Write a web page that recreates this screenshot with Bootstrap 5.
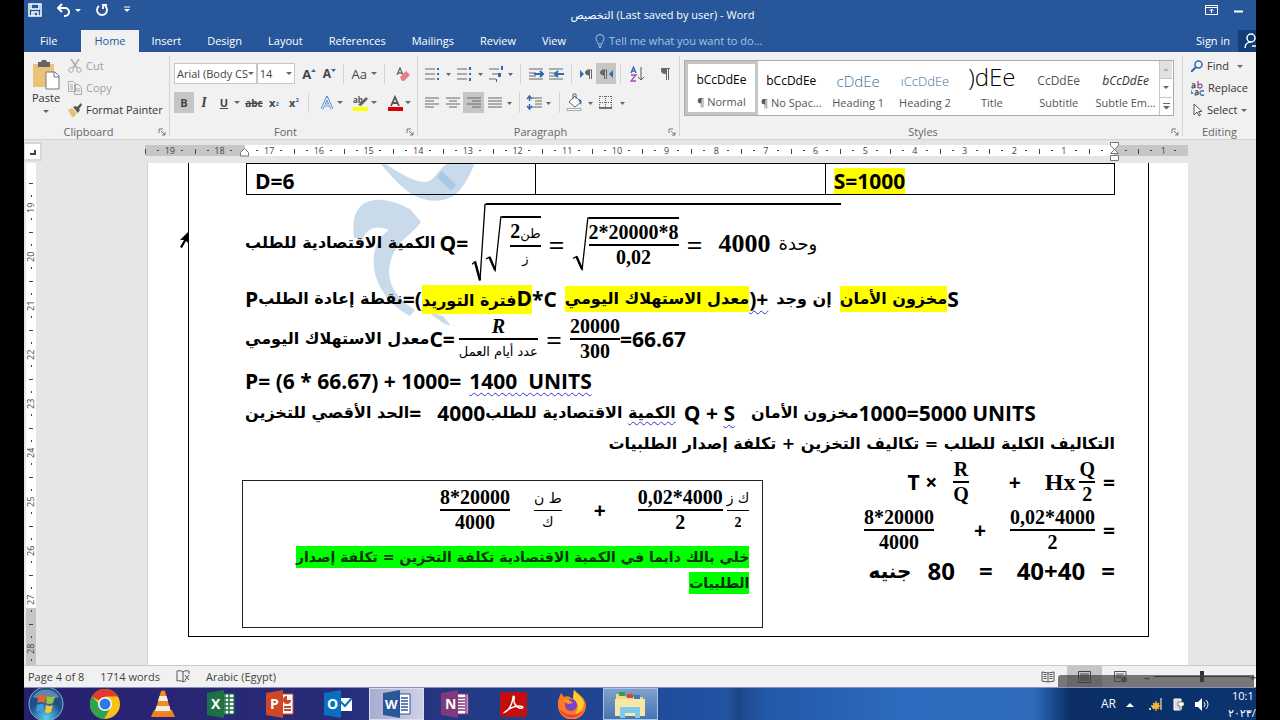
<!DOCTYPE html>
<html lang="en">
<head>
<meta charset="utf-8">
<meta name="viewport" content="width=device-width, initial-scale=1">
<title>التخصيص (Last saved by user) - Word</title>
<link rel="stylesheet" href="https://cdn.jsdelivr.net/npm/bootstrap@5.3.0/dist/css/bootstrap.min.css">
<style>
:root{--word:#27579a}
body{background:#000;font-family:"Open Sans","DejaVu Sans",sans-serif;font-size:11px;line-height:16px;color:#444}
button,input{font:inherit;color:inherit}
button{background:none;border:0;padding:0}
svg{display:block;flex:none}
.word-app{height:100vh;margin:0 24px;background:#e6e6e6;overflow:hidden}
/* title bar and tabs */
.title-bar{height:30px;background:var(--word);color:#fff;padding:0 9px 0 4px}
.title-bar .side{flex:1 1 0;height:20px}
.quick{gap:14px}
.doc-title{padding:7px 0 0 50px}
.tab-bar{height:22px;background:var(--word);color:#fff}
.tab-bar a{color:#fff;text-decoration:none;height:22px;line-height:22px;padding:0 13px}
.tab-bar a.active{background:#f1f1f1;color:#27579a}
.share{width:18px;height:22px;background:#123f78;overflow:hidden}
/* ribbon */
.ribbon{height:88px;background:#f1f1f1;border-bottom:1px solid #d2d2d2}
.grp{border-right:1px solid #d4d4d4;margin:4px 0 3px;position:relative}
.grp-name{position:absolute;left:0;right:16px;bottom:-4px;text-align:center;color:#666}
.edit-grp .grp-name{right:0}
.launch{position:absolute;right:3px;bottom:0}
.dim{color:#a0a0a0}
.stack{gap:6px;padding-top:2px}
.tools{height:21px;margin-top:8px}
.tools:first-child{margin-top:7px}
.caret{width:0;height:0;border:3px solid transparent;border-top-color:#666;border-bottom:0;flex:none}
.on{background:#c5c5c5}
.vr-line{width:1px;height:20px;background:#d4d4d4}
.tool{height:21px;min-width:20px;display:inline-flex;align-items:center;justify-content:center;font-weight:700}
.combo{height:21px;border:1px solid #c6c6c6;background:#fff;padding:0 2px}
.combo input{border:0;padding:0;outline:0;background:none;min-width:0}
.gallery{background:#fff;border:1px solid #ababab;height:56px}
.sty{flex:1 1 0;height:54px;text-align:center;color:#555;overflow:hidden;white-space:nowrap}
.sty b{display:block;height:30px;line-height:38px;font-weight:400;font-size:12px;color:#000}
.sty span{display:block;line-height:22px}
.sty.cur{border:3px solid #c5c5c5}
.sty.cur b{height:27px;line-height:32px}
.gal-nav{width:14px}
.gal-nav button{flex:1 1 0;width:13px;border-left:1px solid #c6c6c6;border-bottom:1px solid #c6c6c6;display:flex;align-items:center;justify-content:center}
/* rulers */
.ruler-row{height:23px}
.ruler{height:11px;margin:5px 68px 0 121px;background:linear-gradient(90deg,#c6c6c6 100px,#fff 100px,#fff calc(100% - 74px),#c6c6c6 calc(100% - 74px));color:#444}
.ruler span{flex:1 1 0;text-align:center;background:linear-gradient(#444,#444) 0 4px/1px 5px no-repeat,linear-gradient(#444,#444) 25% 5px/2px 1px no-repeat,linear-gradient(#444,#444) 75% 5px/2px 1px no-repeat;min-width:0}
.ruler,.v-ruler{font:9px/11px "Open Sans",sans-serif}
.v-ruler{width:10px;margin-left:2px;padding-top:20px;background:linear-gradient(#fff 445px,#c6c6c6 445px);color:#444}
.v-ruler span{flex:0 0 49px;width:10px;display:flex;align-items:center;justify-content:center;writing-mode:vertical-rl;transform:rotate(180deg);line-height:10px;background:linear-gradient(#444,#444) 3px 100%/4px 1px no-repeat,linear-gradient(#444,#444) 4px 25%/1px 2px no-repeat,linear-gradient(#444,#444) 4px 75%/1px 2px no-repeat}
.tab-sel{width:15px;height:15px;margin:4px 0 0 1px;background:#fff;outline:2px solid #d8d8d8}
/* page */
.sheet{margin:0 68px 0 111px;padding:1px 0 0;background:#fff;border-left:1px solid #d0d0d0;overflow:hidden}
.framed{margin:-1px 39px 28px 40px;border:1px solid #000;border-top:0;padding:0 33px 0 57px;color:#000;position:relative;font:700 21px/30px "Open Sans","DejaVu Sans",sans-serif}
.framed>*{position:relative}
.framed>.mark-svg{position:absolute;left:150px;top:0}
.vals{width:100%;border-collapse:collapse;table-layout:fixed}
.vals td{border:1px solid #000;height:31px;padding:3px 8px 0;line-height:26px}
.hl{background:#ff0;display:inline-block}
.eq{white-space:nowrap;display:flex;align-items:center;margin-left:-1px;height:30px}
.eq.h26{height:26px;line-height:26px}
.eq.h28{height:28px}
.eq.h34{height:34px}
.eq.h54{height:54px}
.eq.h91{height:91px}
.ar{font-family:"DejaVu Sans",sans-serif;font-size:16px}
.thin{font-weight:400}
.equals{font-size:28px;font-weight:400;line-height:20px}
.frac{display:inline-flex;flex-direction:column;align-items:center;font:700 20px/23px "Liberation Serif","DejaVu Sans",serif}
.frac>:first-child{border-bottom:2px solid #000;align-self:stretch;text-align:center}
.frac .ar{font-size:13px;font-weight:400}
.frac.tiny,.frac.tiny .ar{font-size:14px}
.frac.tiny>:first-child{border-bottom-width:1px}
.root{display:flex;align-items:stretch}
.root>div{border-top:2px solid #000;display:flex;align-items:center}
.serif{font-family:"Liberation Serif",serif;font-size:24px}
.root .serif{font-size:26px}
.root>div>.ar{font-size:18px}
.wavy{text-decoration:underline wavy #3a3ac0 1px;text-underline-offset:3px}
.note{border:1px solid #222;height:148px;flex:0 0 60%;margin:22px 0 0 -4px;padding:5px 13px}
.note p{font:700 14px/26px "DejaVu Sans",sans-serif;margin:10px 0 0}
.green{background:#0f0;padding:3px 0;color:#063006}
.total{font-size:24px;line-height:34px}
.total .ar{font-size:20px}
/* bottom bars */
.status{height:22px;background:#f1f1f1;border-top:1px solid #c8c8c8;position:relative}
.view-on{width:35px;height:21px}
.shade{position:absolute;right:2px;width:196px;top:9px;height:12px;background:rgba(60,60,60,.68);border-radius:3px 3px 0 0}
.zoom{appearance:none;width:96px;height:14px;background:linear-gradient(#333,#333) center/100% 1px no-repeat}
.zoom::-webkit-slider-thumb{appearance:none;width:4px;height:11px;background:#333}
.taskbar{height:33px;border-top:1px solid #8395b8;background:linear-gradient(90deg,#28206e,#272b78 23%,#213f8a 42%,#2050a0 55%,#2354a2 57%,#1d4689 58%,#2258a8 60%,#2d6cc0 72%,#2e6bbb 82%,#0a2d64 85%,#0b3470)}
.task{width:55px;height:32px;display:flex;align-items:center;justify-content:center;flex:none}
.task.start{width:44px}
.pinned{flex:0 1 581px;margin-left:9px}
.task.open{background:linear-gradient(90deg,#a8adcf,#cdd1e4);border:1px solid #dde}
.task.half{background:linear-gradient(#7fa0cb,#4775b3);border:1px solid #a9c4e4}
.tray{color:#fff;gap:10px}
.clock{width:28px;line-height:17px;white-space:nowrap}
</style>
<script src="https://cdn.jsdelivr.net/npm/bootstrap@5.3.0/dist/js/bootstrap.bundle.min.js"></script>
</head>
<body>
<svg width="0" height="0" class="position-absolute">
 <defs>
  <symbol id="launch" viewBox="0 0 8 8"><path d="M1 5V1h4M3 3l4 4M7 4v3H4" fill="none" stroke="#777"/></symbol>
  <symbol id="rad" viewBox="0 0 14 60" preserveAspectRatio="none"><path d="M0 46l3-2 5 14L13 1h1" fill="none" stroke="#000" stroke-width="1.3" vector-effect="non-scaling-stroke"/><path d="M3 44l5 14" fill="none" stroke="#000" stroke-width="2.400" vector-effect="non-scaling-stroke"/></symbol>
 </defs>
</svg>
<div class="word-app d-flex flex-column">
 <header class="title-bar d-flex flex-shrink-0">
  <div class="side quick d-flex align-items-center">
   <button aria-label="Save"><svg width="14" height="14" viewBox="0 0 14 14"><path d="M1 1h12v12H1zM3 1v5h8V1M4 13V9h6v4M6 10v3" fill="none" stroke="#fff" stroke-width="1.5"/></svg></button>
   <button aria-label="Undo" class="d-flex align-items-center gap-1"><svg width="15" height="14" viewBox="0 0 15 14"><path d="M2 5h7a4 4 0 0 1 0 8H8M6 1L2 5l4 4" fill="none" stroke="#fff" stroke-width="2"/></svg><i class="caret" style="border-top-color:#fff"></i></button>
   <button aria-label="Redo"><svg width="14" height="14" viewBox="0 0 14 14"><path d="M4 3a5 5 0 1 0 6 0M8 6V2h4" fill="none" stroke="#fff" stroke-width="1.8"/></svg></button>
   <button aria-label="Customize"><svg width="8" height="8"><path d="M1 1h6" stroke="#fff"/><path d="M1 3h6L4 6z" fill="#fff"/></svg></button>
  </div>
  <div class="doc-title"><span class="ar" style="font-size:11px">التخصيص</span> (Last saved by user) - Word</div>
  <div class="side d-flex align-items-center justify-content-end gap-3">
   <button aria-label="Ribbon display options"><svg width="13" height="10" viewBox="0 0 13 10"><path d="M.5.5h12v9H.5zM.5 2.5h12M6.500 8V4M4.500 6l2-2 2 2" fill="none" stroke="#fff"/></svg></button>
   <button aria-label="Minimize" class="me-1"><svg width="9" height="6"><path d="M0 4.500h9" stroke="#fff" stroke-width="2"/></svg></button>
  </div>
 </header>
 <nav class="tab-bar d-flex flex-shrink-0">
  <a href="#" class="px-3">File</a><a href="#" class="active ms-2">Home</a><a href="#">Insert</a><a href="#">Design</a><a href="#">Layout</a><a href="#">References</a><a href="#">Mailings</a><a href="#">Review</a><a href="#">View</a>
  <button class="d-flex align-items-center gap-1 ms-3" style="color:#a9c1e4"><svg width="10" height="14" viewBox="0 0 10 14"><path d="M3 10C3 8 1 7 1 4.500a4 4 0 0 1 8 0C9 7 7 8 7 10zM3 12h4M4 13.500h2" fill="none" stroke="#a9c1e4"/></svg>Tell me what you want to do...</button>
  <a href="#" class="ms-auto px-2">Sign in</a>
  <button class="share" aria-label="Share"><svg width="18" height="18" viewBox="0 0 18 18"><circle cx="13" cy="6" r="4" fill="none" stroke="#fff" stroke-width="1.500"/><path d="M7 16c0-4 3-6 6-6M14 14h5" fill="none" stroke="#fff" stroke-width="1.500"/></svg></button>
 </nav>
 <section class="ribbon d-flex flex-shrink-0">
  <div class="grp" style="width:146px">
   <div class="d-flex">
    <button class="text-center ps-2 pt-1 align-self-start" style="color:#333"><svg class="mx-auto" width="28" height="30" viewBox="0 0 28 30"><path d="M1 4h21v23H1z" fill="#eac378"/><path d="M6 2h3l1-2h4l1 2h3v5H6z" fill="#666"/><path d="M14 12h9l4 4v13H14z" fill="#fff" stroke="#777"/><path d="M22 12v5h5" fill="none" stroke="#777"/></svg>Paste<i class="caret d-block mx-auto mt-1"></i></button>
    <div class="stack d-flex flex-column ps-2">
     <button class="dim d-flex gap-1 align-items-center"><svg width="14" height="14" viewBox="0 0 14 14"><path d="M3 0l6 9M11 0L5 9" stroke="#aaa" stroke-width="1.500"/><circle cx="3" cy="11" r="2.300" fill="none" stroke="#aaa"/><circle cx="11" cy="11" r="2.300" fill="none" stroke="#aaa"/></svg>Cut</button>
     <button class="dim d-flex gap-1 align-items-center"><svg width="14" height="14" viewBox="0 0 14 14"><path d="M.5.5h5l2 2v8h-7zM6.500 3.500h4l3 3v7h-7zM2 4h3M2 6h3M2 8h3M8 8h4M8 10h4" fill="none" stroke="#aaa"/></svg>Copy</button>
     <button class="d-flex gap-1 align-items-center" style="color:#333"><svg width="14" height="14" viewBox="0 0 14 14"><path d="M0 7l4-2 5 5-3 4H4z" fill="#e8bf72"/><path d="M5 4l3-1 4 4-2 3zM9 4l4-4 1 2-3 4z" fill="#555"/></svg>Format Painter</button>
    </div>
   </div>
   <div class="grp-name">Clipboard</div><svg class="launch" width="8" height="8"><use href="#launch"/></svg>
  </div>
  <div class="grp px-1" style="width:248px">
   <div class="tools d-flex align-items-center">
    <label class="combo d-flex align-items-center" style="width:88px"><input aria-label="Font" value="Arial (Body CS" class="w-100"><i class="caret"></i></label>
    <label class="combo d-flex align-items-center" style="width:41px"><input aria-label="Font size" value="14" class="w-100"><i class="caret"></i></label>
    <button class="tool ms-1" style="font-size:13px">A<svg width="5" height="12"><path d="M0 4l2.500-3L5 4z" fill="#2e6bb0"/></svg></button>
    <button class="tool" style="font-size:12px">A<svg width="5" height="12"><path d="M0 1h5L2.500 4z" fill="#2e6bb0"/></svg></button>
    <i class="vr-line ms-1"></i>
    <button class="tool ms-2 gap-1 fw-normal" style="font-size:13px">Aa<i class="caret"></i></button>
    <i class="vr-line ms-2"></i>
    <button class="tool ms-2" aria-label="Clear formatting"><svg width="14" height="14" viewBox="0 0 14 14"><path d="M1 8L4 1l3 7M2 6h4" fill="none" stroke="#666" stroke-width="1.300"/><path d="M4 10l6-6 4 4-6 6H6z" fill="#e57b8b"/></svg></button>
   </div>
   <div class="tools d-flex align-items-center">
    <button class="tool on">B</button><button class="tool fst-italic" style="font-family:'Liberation Serif',serif;font-size:14px">I</button>
    <button class="tool text-decoration-underline">U</button><i class="caret me-1"></i>
    <button class="tool text-decoration-line-through" style="font-size:10px">abc</button>
    <button class="tool">x<sub style="font-size:6px;color:#2e6bb0">2</sub></button><button class="tool">x<sup style="font-size:6px;color:#2e6bb0">2</sup></button>
    <i class="vr-line ms-1 me-1"></i>
    <button class="tool ms-1" aria-label="Text effects"><svg width="14" height="14" viewBox="0 0 14 14"><path d="M2 13L7 2l5 11M4 9h6" fill="none" stroke="#5b93cf" stroke-width="3"/><path d="M2 13L7 2l5 11M4 9h6" fill="none" stroke="#fff"/></svg></button><i class="caret"></i>
    <button class="tool ms-2" aria-label="Highlight"><svg width="16" height="17" viewBox="0 0 16 17"><text x="0" y="9" font-size="8" font-weight="700" fill="#555">ab</text><path d="M5 11l8-8 2 2-7 7z" fill="#666"/><path d="M0 13h15v4H0z" fill="#ff0"/></svg></button><i class="caret"></i>
    <button class="tool ms-2" aria-label="Font color"><svg width="15" height="16" viewBox="0 0 15 16"><path d="M3 11l4-9 4 9M5 8h5" fill="none" stroke="#555" stroke-width="1.800"/><path d="M0 12h15v4H0z" fill="#d00"/></svg></button><i class="caret"></i>
   </div>
   <div class="grp-name">Font</div><svg class="launch" width="8" height="8"><use href="#launch"/></svg>
  </div>
  <div class="grp px-1" style="width:262px">
   <div class="tools d-flex align-items-center">
    <svg width="205" height="21" viewBox="0 -2 205 21" role="img" aria-label="Lists and indents"><path d="M3 4h10M3 9h10M3 14h10M35 4h10M35 9h10M35 14h10M67 4h10M70 9h7M67 14h7M107 4h14M107 8h7M107 11h7M107 14h14M127 4h14M127 8h7M127 11h7M127 14h14" stroke="#666"/><path d="M15 3h2v2h-2zM15 8h2v2h-2zM15 13h2v2h-2zM47 2h2v3h-2zM47 8h2v2h-2zM47 13h2v3h-2zM79 1h2v4h-2zM76 8h3v4h-3zM74 14h1v3h-1z" fill="#2e6bb0"/><path d="M24 8h5l-2.500 3zM56 8h5l-2.500 3zM86 8h5l-2.500 3z" fill="#666"/><path d="M112 9h9M118 6l3 3-3 3M142 9h-9M136 6l-3 3 3 3" fill="none" stroke="#2e6bb0" stroke-width="2"/><path d="M98.500 -1v20M149.500 -1v20" stroke="#d4d4d4"/><path d="M158 5l4 4-4 4z" fill="#2e6bb0"/><path d="M165 5h5M167.500 5v9M169.500 5v9" stroke="#666"/><path d="M163 7.500a2.500 2.500 0 0 1 4-2v5c-2 0-4-1-4-3z" fill="#666"/><path d="M174 -2h20v22h-20z" fill="#c5c5c5"/><path d="M191 5l-4 4 4 4z" fill="#2e6bb0"/><path d="M180 5h5M182.500 5v9M184.500 5v9" stroke="#666"/><path d="M178 7.500a2.500 2.500 0 0 1 4-2v5c-2 0-4-1-4-3z" fill="#666"/><path d="M198.500 -1v20" stroke="#d4d4d4"/></svg>
    <button class="tool" aria-label="Sort"><svg width="14" height="16" viewBox="0 0 14 16"><path d="M1 7l2.500-6L6 7M2 5h3" fill="none" stroke="#2e6bb0" stroke-width="1.300"/><path d="M1 9h5l-5 6h5" fill="none" stroke="#a04fb0" stroke-width="1.300"/><path d="M11 1v13M8 11l3 3 3-3" fill="none" stroke="#555"/></svg></button>
    <i class="vr-line ms-1"></i>
    <button class="tool fw-normal ms-1" aria-label="Show marks"><svg width="9" height="12" viewBox="0 0 9 12"><path d="M3 .5h6M5.500 0v12M7.500 0v12" stroke="#666"/><path d="M0 3a3 3 0 0 1 5-3v6C2 6 0 5 0 3z" fill="#666"/></svg></button>
   </div>
   <div class="tools d-flex align-items-center">
    <svg width="210" height="21" viewBox="0 0 210 21" role="img" aria-label="Alignment and borders"><path d="M41 0h21v21H41z" fill="#c5c5c5"/><path d="M3 6h14M3 9h9M3 12h14M3 15h9M24 6h14M27 9h8M24 12h14M27 15h8M45 6h14M50 9h9M45 12h14M50 15h9M66 6h14M66 9h14M66 12h14M66 15h14M110 6h10M113 9h7M113 12h7M110 15h10" stroke="#666"/><path d="M107.500 4v5M107.500 12v5M105 7l2.500-3 2.500 3M105 14l2.500 3 2.500-3" fill="none" stroke="#2e6bb0" stroke-width="1.500"/><path d="M85 10h5l-2.500 3zM124 10h5l-2.500 3zM166 10h5l-2.500 3zM198 10h5l-2.500 3z" fill="#666"/><path d="M97.500 0v21M137.500 0v21" stroke="#d4d4d4"/><path d="M147 10l6-6 6 6-6 5z" fill="#fff" stroke="#666"/><path d="M151 7V2h3v5" fill="none" stroke="#666"/><path d="M156 7c4 0 4 3 3 6z" fill="#2e6bb0"/><path d="M145 16.500h14v2h-14z" fill="#fff" stroke="#888" stroke-width=".7"/><path d="M177.500 4v12M183.500 4v12M189.500 4v12M178 4.500h12M178 10.500h12" stroke="#666" stroke-dasharray="1 1"/><path d="M177 16h13" stroke="#444" stroke-width="1.500"/></svg>
   </div>
   <div class="grp-name">Paragraph</div><svg class="launch" width="8" height="8"><use href="#launch"/></svg>
  </div>
  <div class="grp flex-grow-1 px-1">
   <div class="gallery d-flex mt-1 me-1">
    <button class="sty cur"><b>bCcDdEe</b><span>¶ Normal</span></button>
    <button class="sty"><b>bCcDdEe</b><span>¶ No Spac...</span></button>
    <button class="sty"><b style="font-size:15px;color:#41719c" class="fw-light">cDdEe</b><span>Heading 1</span></button>
    <button class="sty"><b style="font-size:13px;color:#41719c" class="fw-light">ıCcDdEe</b><span>Heading 2</span></button>
    <button class="sty"><b style="font-size:24px;line-height:30px" class="fw-light">)dEe</b><span>Title</span></button>
    <button class="sty"><b style="color:#555">CcDdEe</b><span>Subtitle</span></button>
    <button class="sty"><b class="fst-italic" style="color:#333">bCcDdEe</b><span>Subtle Em...</span></button>
    <div class="gal-nav d-flex flex-column"><button style="background:#e1e1e1" aria-label="Up"><i class="caret" style="transform:rotate(180deg);opacity:.4"></i></button><button aria-label="Down"><i class="caret"></i></button><button aria-label="More" class="border-bottom-0"><svg width="7" height="7"><path d="M0 .5h7" stroke="#666"/><path d="M0 3h7L3.500 6.500z" fill="#666"/></svg></button></div>
   </div>
   <div class="grp-name">Styles</div><svg class="launch" width="8" height="8"><use href="#launch"/></svg>
  </div>
  <div class="grp edit-grp border-0" style="width:73px;color:#333">
   <div class="stack d-flex flex-column ps-1 ms-1">
    <button class="d-flex align-items-center gap-1"><svg width="12" height="12" viewBox="0 0 12 12"><circle cx="7.500" cy="4.500" r="3.500" fill="none" stroke="#2e6bb0" stroke-width="1.500"/><path d="M5 7l-5 5" stroke="#2e6bb0" stroke-width="2"/></svg>Find<i class="caret ms-1"></i></button>
    <button class="d-flex align-items-center gap-1"><svg width="13" height="15" viewBox="0 0 13 15"><g fill="none" stroke-width="1.300"><path d="M1 3q3-1 3 1v3M4 5q-3-1-3 1t3 0" stroke="#555"/><path d="M7 0v7M7 4q4-2 4 1t-4 1.500" stroke="#8a4fa0"/><path d="M4 10q3-1 3 1v3M7 12q-3-1-3 1t3 0" stroke="#555"/><path d="M13 10q-4-1-4 2t4 2M0 9v3h2" stroke="#2e6bb0"/></g></svg>Replace</button>
    <button class="d-flex align-items-center gap-1"><svg width="12" height="14" viewBox="0 0 12 14"><path d="M3 1v11l3-3 2 4 1.500-1-2-3.500H11z" fill="#fff" stroke="#555"/></svg>Select<i class="caret"></i></button>
   </div>
   <div class="grp-name">Editing</div>
  </div>
 </section>
 <div class="ruler-row flex-shrink-0 d-flex">
  <div class="tab-sel"><svg width="15" height="15"><path d="M5 10h5V6" fill="none" stroke="#444" stroke-width="2"/></svg></div>
  <div class="flex-grow-1 position-relative" style="margin-left:-16px">
   <div class="ruler d-flex"><span>19</span><span>18</span><span>17</span><span>16</span><span>15</span><span>14</span><span>13</span><span>12</span><span>11</span><span>10</span><span>9</span><span>8</span><span>7</span><span>6</span><span>5</span><span>4</span><span>3</span><span>2</span><span>1</span><span></span><span>1</span></div>
   <svg class="position-absolute" style="left:216px;top:8px" width="9" height="9"><path d="M.5 8V4.500l4-4 4 4V8z" fill="#fff" stroke="#777"/></svg>
   <svg class="position-absolute" style="right:137px;top:2px" width="9" height="19"><path d="M.5.5h8v3l-8 8h8l-8-8zM.5 13.500h8v5h-8z" fill="#fff" stroke="#777"/></svg>
  </div>
 </div>
 <main class="d-flex flex-grow-1 overflow-hidden" style="flex-basis:0">
  <div class="v-ruler d-flex flex-column"><span>19</span><span>20</span><span>21</span><span>22</span><span>23</span><span>24</span><span>25</span><span>26</span><span>27</span><span>28</span></div>
  <article class="sheet flex-grow-1 position-relative">
   <div class="framed">
    <svg class="mark-svg" width="150" height="170" viewBox="339 163 150 170"><g fill="#c9dbeb"><path d="M384 163c14 9 28 18 40 19 8 0 11-6 16-12l7-7h28c-6 14-15 32-26 35-12 5-27 3-39-5-11-8-20-18-30-30z"/><path d="M354 238c-3-22 4-34 16-37 15-4 29 3 40 8l11 13c-6 8-14 14-21 21-10 12-14 28-8 43 5 11 14 18 23 24l-5 6c-19-10-33-27-36-48-2-17 4-31 15-38-11-5-22-3-26 9z"/><path d="M428 312l15 4 8 10-8-3z"/></g><path d="M437 177l5-6 14 14-5 6z" fill="#a9c8e2"/></svg>
    <table class="vals"><tr><td>D=6</td><td></td><td><span class="hl">S=1000</span></td></tr></table>
    <div class="eq h91 pt-1">
     <span class="ar" lang="ar" dir="rtl">الكمية الاقتصادية للطلب</span><span class="ms-1">Q=</span>
     <div class="root ms-1" style="height:80px"><svg width="14" height="80"><use href="#rad"/></svg><div class="pe-4">
      <div class="root" style="height:56px"><svg width="16" height="56"><use href="#rad"/></svg><div class="ps-2"><span class="frac"><span>2<span class="ar">طن</span></span><span class="ar">ز</span></span></div></div>
      <span class="mx-2 equals">=</span>
      <div class="root" style="height:54px"><svg width="16" height="54"><use href="#rad"/></svg><div><span class="frac"><span>2*20000*8</span><span>0,02</span></span></div></div>
      <span class="ms-2 me-3 equals">=</span><span class="serif">4000</span><span class="ar thin ms-2" lang="ar">وحدة</span>
     </div></div>
    </div>
    <div class="eq h26"><span>P</span><span class="ar" lang="ar" dir="rtl">نقطة إعادة الطلب</span><span>=(</span><span class="hl"><span class="ar" lang="ar" dir="rtl">فترة التوريد</span>D</span><span>*C</span><span class="hl ms-2 ar" lang="ar" dir="rtl">معدل الاستهلاك اليومي</span><span class="wavy">)+</span><span class="ar ms-2" lang="ar" dir="rtl">إن وجد</span><span class="hl ar ms-2" lang="ar" dir="rtl">مخزون الأمان</span><span>S</span></div>
    <div class="eq h54"><span class="ar" lang="ar" dir="rtl">معدل الاستهلاك اليومي</span><span>C=</span><span class="frac ms-1"><i>R</i><span class="ar" lang="ar">عدد أيام العمل</span></span><span class="mx-2 equals">=</span><span class="frac"><span>20000</span><span>300</span></span><span>=66.67</span></div>
    <div class="eq">P= (6 * 66.67) + 1000=<span class="wavy ms-2">1400&nbsp; UNITS</span></div>
    <div class="eq h34"><span class="ar" lang="ar" dir="rtl">الحد الأقصي للتخزين</span><span>=</span><span class="ms-3">4000</span><span class="ar" lang="ar" dir="rtl"><span class="wavy">الكمية</span> الاقتصادية للطلب</span><span class="ms-2">Q + <span class="wavy">S</span></span><span class="ar ms-3" lang="ar" dir="rtl">مخزون الأمان</span><span>1000=5000 UNITS</span></div>
    <div class="eq h28 ar" lang="ar" dir="rtl">التكاليف الكلية للطلب = تكاليف التخزين + تكلفة إصدار الطلبيات</div>
    <div class="d-flex justify-content-between">
     <aside class="note">
      <div class="d-flex align-items-center" dir="rtl"><span class="frac tiny"><span class="ar">ك ز</span><span>2</span></span><span class="frac me-1" dir="ltr"><span>0,02*4000</span><span>2</span></span><span class="mx-4 px-2">+</span><span class="frac tiny"><span class="ar">ط ن</span><span class="ar">ك</span></span><span class="frac me-4" dir="ltr"><span>8*20000</span><span>4000</span></span></div>
      <p lang="ar" dir="rtl"><span class="green">خلي بالك دايما في الكمية الاقتصادية تكلفة التخزين = تكلفة إصدار الطلبيات</span></p>
     </aside>
     <div dir="rtl" class="flex-grow-1">
      <div class="d-flex align-items-center"><span>=</span><span class="frac me-2"><span>Q</span><span>2</span></span><span class="serif me-1">Hx</span><span class="mx-4">+</span><span class="frac mx-3"><span>R</span><span>Q</span></span><span dir="ltr">T ×</span></div>
      <div class="d-flex align-items-center"><span>=</span><span class="frac mx-2" dir="ltr"><span>0,02*4000</span><span>2</span></span><span class="mx-3">+</span><span class="frac mx-4" dir="ltr"><span>8*20000</span><span>4000</span></span></div>
      <div class="total d-flex align-items-center"><span>=</span><span class="me-3">40+40</span><span class="me-4 ms-4">=</span><span>80</span><span class="ar mx-3" lang="ar">جنيه</span></div>
     </div>
    </div>
    <div class="pt-2"></div>
   </div>
   <svg class="position-absolute" style="left:31px;top:67px" width="12" height="20"><path d="M10 1v13l-3-3-4 7-2-1 4-7-4 0z" fill="#000"/></svg>
  </article>
 </main>
 <footer class="status d-flex align-items-center flex-shrink-0 ps-1">
  <span>Page 4 of 8</span><span class="ms-3">1714 words</span>
  <svg class="ms-3" width="14" height="13" viewBox="0 0 14 13"><path d="M7 2C5 .5 3 .5 1 1v10c2-.5 4-.5 6 1V2c2-1.500 4-1.500 6-1v3M7 12c1-.7 2-1 3-1M9 5l4 5M13 5l-4 5" fill="none" stroke="#555"/></svg><span class="ms-3">Arabic (Egypt)</span>
  <div class="ms-auto d-flex align-items-center">
   <svg class="me-1" width="14" height="12" viewBox="0 0 14 12"><path d="M7 2L1 1v9l6 1 6-1V1L7 2v9M2.500 3.500h3M2.500 5.500h3M2.500 7.500h3M8.500 3.500h3M8.500 5.500h3M8.500 7.500h3" fill="none" stroke="#555"/></svg>
   <span class="view-on on d-flex align-items-center justify-content-center mx-2"><svg width="13" height="12"><path d="M.5.5h12v11H.5zM2 3h9M2 5h9M2 7h9M2 9h9" fill="none" stroke="#444"/></svg></span>
   <svg class="ms-1" width="14" height="12"><path d="M12 5V.5H.5v10H7M2 3h8M2 5h6M2 7h5" fill="none" stroke="#555"/><circle cx="10" cy="8.500" r="3" fill="#666"/></svg>
   <span class="ms-3 me-1 fw-bold">–</span><input class="zoom" type="range" aria-label="Zoom"><span class="fw-bold">+</span>
  </div>
  <div class="shade"></div>
 </footer>
 <nav class="taskbar d-flex align-items-center flex-shrink-0 overflow-hidden">
  <button class="task start" aria-label="Start"><svg width="36" height="34" viewBox="0 0 36 34"><defs><radialGradient id="orb" cy=".9"><stop offset="0" stop-color="#5ad0f0"/><stop offset="1" stop-color="#1d4f86"/></radialGradient></defs><circle cx="18" cy="17" r="17" fill="url(#orb)" stroke="#7eb4d8"/><path d="M5 10a15 15 0 0 1 26 0c-8 3-18 3-26 0z" fill="#fff" opacity=".3"/><path d="M11 9q4-2 7 0l-1 7q-4-2-8 0z" fill="#e8642c"/><path d="M19 9q4 2 8 0l-2 7q-4 2-7 0z" fill="#92c83e"/><path d="M9 18q4-2 7 0l-1 7q-4-2-7 0z" fill="#3f9be0"/><path d="M18 18q4 2 7 0l-2 7q-4 2-6 0z" fill="#fbc62d"/></svg></button>
  <div class="pinned d-flex justify-content-between">
  <button class="task" aria-label="Chrome"><svg width="30" height="30" viewBox="0 0 30 30"><circle cx="15" cy="15" r="15" fill="#fbc116"/><path d="M15 15L2 7.500A15 15 0 0 1 28 7.500H15z" fill="#e33b2e"/><path d="M2 7.500A15 15 0 0 0 14 30l7-12-6-3-5 1z" fill="#2fa14f"/><circle cx="15" cy="15" r="7" fill="#fff"/><circle cx="15" cy="15" r="5.500" fill="#3079e8"/></svg></button>
  <button class="task" aria-label="VLC"><svg width="26" height="28" viewBox="0 0 26 28"><path d="M4 20h18l3 7H1z" fill="#f08018"/><path d="M11 1q2-1 4 0l6 21q-8 3-16 0z" fill="#f58a1e"/><path d="M9.500 6h7l1.500 5H8zM6.500 16h13l1 5H5z" fill="#eee"/></svg></button>
  <button class="task" aria-label="Excel"><svg width="28" height="28" viewBox="0 0 28 28"><path d="M14 4h13v20H14z" fill="#fff" stroke="#1e7145"/><path d="M18 4v20M22 4v20M15 8h12M15 12h12M15 16h12M15 20h12" stroke="#1e7145" stroke-width="1.500"/><path d="M0 3l17-3v28L0 25z" fill="#1e7145"/><text x="4" y="19" font-size="14" font-weight="700" fill="#fff">X</text></svg></button>
  <button class="task" aria-label="PowerPoint"><svg width="28" height="28" viewBox="0 0 28 28"><path d="M14 4h13v20H14z" fill="#fff" stroke="#d04727"/><circle cx="21" cy="10" r="4" fill="#d04727"/><path d="M21 10V5h5v5z" fill="#fff"/><path d="M18 17h7M18 20h7" stroke="#d04727" stroke-width="2"/><path d="M0 3l17-3v28L0 25z" fill="#d04727"/><text x="4" y="19" font-size="14" font-weight="700" fill="#fff">P</text></svg></button>
  <button class="task" aria-label="Outlook"><svg width="28" height="28" viewBox="0 0 28 28"><path d="M15 8h13v13H15z" fill="#fff"/><path d="M16 11l5 5 7-8" fill="none" stroke="#0a6fc2" stroke-width="2"/><path d="M0 3l17-3v28L0 25z" fill="#0a6fc2"/><text x="3" y="19" font-size="14" font-weight="700" fill="#fff">O</text></svg></button>
  <button class="task open" aria-label="Word"><svg width="28" height="28" viewBox="0 0 28 28"><path d="M14 4h13v20H14z" fill="#fff" stroke="#2a579a"/><path d="M18 8h7M18 11h7M18 14h7M18 17h7M18 20h7" stroke="#2a579a" stroke-width="1.500"/><path d="M0 3l17-3v28L0 25z" fill="#2a579a"/><text x="2" y="19" font-size="13" font-weight="700" fill="#fff">W</text></svg></button>
  <button class="task" aria-label="OneNote"><svg width="28" height="28" viewBox="0 0 28 28"><path d="M14 4h13v20H14z" fill="#fff" stroke="#80397b"/><path d="M16 8h8M16 11h8M16 14h8M16 17h8M16 20h8M25 4v20" stroke="#80397b" stroke-width="1.500"/><path d="M0 3l17-3v28L0 25z" fill="#80397b"/><text x="4" y="19" font-size="14" font-weight="700" fill="#fff">N</text></svg></button>
  <button class="task" aria-label="Acrobat"><svg width="27" height="25" viewBox="0 0 27 25"><rect width="27" height="25" rx="2" fill="#c40d0d"/><path d="M5 20c4-1 7-8 8-14 0-3 2-2 1 1-1 6 5 10 8 9 2-1 0-2-3-2-5 0-11 3-14 6z" fill="none" stroke="#fff" stroke-width="1.500"/></svg></button>
  <button class="task" aria-label="Firefox"><svg width="30" height="30" viewBox="0 0 30 30"><path d="M2 9l2-5 3 4 4-1 5 3 1-9c6 5 11 8 12 15a14 14 0 0 1-28 1c0-4 0-6 1-8z" fill="#ff7a1e"/><path d="M17 0c1 5 9 7 10 14 0 6-4 10-9 11 5-7 3-12-2-15z" fill="#ffcb2f"/><path d="M2 19c4 12 18 12 25 3-7 5-19 6-25-3z" fill="#f0364e"/><circle cx="14" cy="16" r="6" fill="#7a45c8"/><path d="M5 10l7 1 4 3-5 1z" fill="#ff9a24"/></svg></button>
  <button class="task half" aria-label="Explorer"><svg width="32" height="28" viewBox="0 0 32 28"><path d="M2 4h8l2 3h17v19H2z" fill="#efd98a"/><path d="M5 2h6v4H5z" fill="#2e9e4e"/><path d="M13 4h6v4h-6z" fill="#d8442e"/><path d="M20 5h6v4h-6z" fill="#3a7cc8"/><path d="M1 9h30v17H1z" fill="#f7e8a6"/><path d="M6 17h20v11h-5v-5H11v5H6z" fill="#7ecbee"/></svg></button>
  </div>
  <div class="tray ms-auto d-flex align-items-center">
   <span style="font-size:12px">AR</span>
   <svg class="me-1" width="8" height="5"><path d="M0 5l4-4 4 4z" fill="#fff"/></svg>
   <svg width="15" height="14"><path d="M1 12h2M4 10h2M7 7h2" stroke="#ccc" stroke-width="2"/><path d="M12 1h2v12h-2z" fill="#999"/><path d="M8 4v10M3 9h10M5 6l6 6M11 6l-6 6" stroke="#f6b52a" stroke-width="1.300"/><circle cx="8" cy="9" r="3" fill="#f6b52a"/></svg>
   <svg width="12" height="14"><path d="M1 2h7v11H1z" fill="#ddd" stroke="#fff"/><path d="M5 5h6v4H9v4H7V9H5z" fill="#fff" stroke="#333" stroke-width=".6"/></svg>
   <svg width="15" height="13"><path d="M0 4h3l4-4v13L3 9H0z" fill="#fff"/><path d="M9 4q2 2 0 5M11 2q4 4 0 9" fill="none" stroke="#fff"/></svg>
   <div class="clock ms-2"><div class="ps-1">10:1</div><div>٢٠٢٣/</div></div>
  </div>
 </nav>
</div>
</body>
</html>
